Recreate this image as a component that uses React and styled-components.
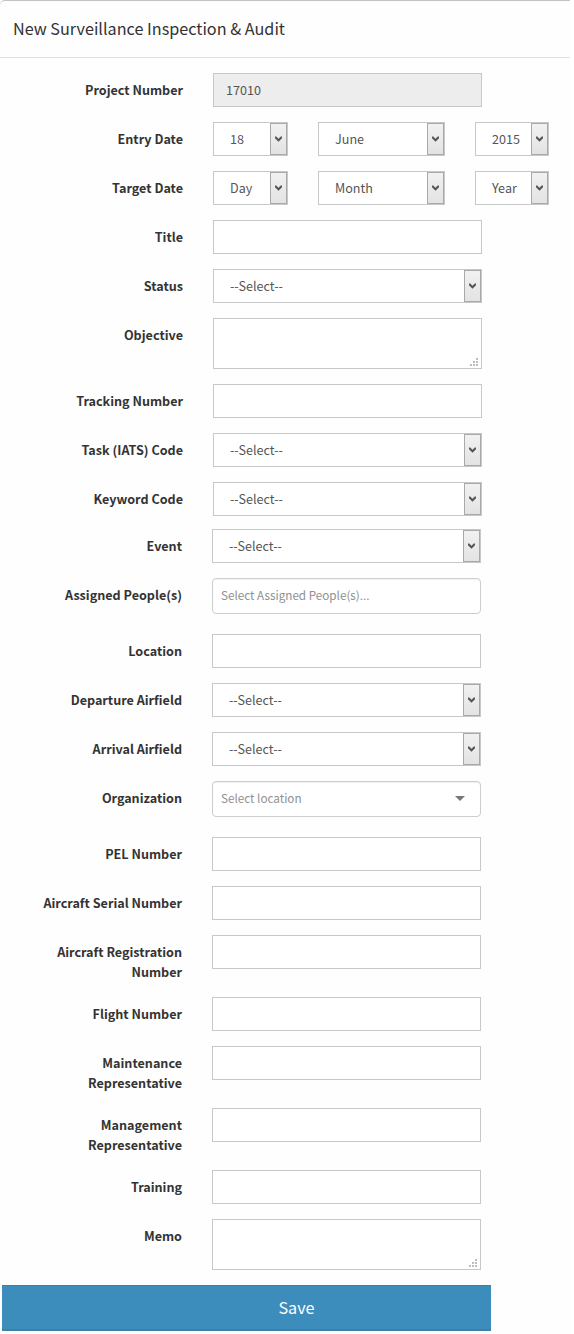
import React from 'react';
import styled, { createGlobalStyle } from 'styled-components';

const GlobalStyle = createGlobalStyle`
  *, *::before, *::after { box-sizing: border-box; }
  html, body { margin: 0; padding: 0; background: #fff; }
  body {
    font-family: "Noto Sans CJK SC", "Open Sans", sans-serif;
    font-size: 12.6px;
    line-height: 20px;
    color: #333;
  }
`;

const Dialog = styled.main`
  width: 570px;
  height: 1334px;
  border-top: 1px solid #c3c3c3;
  border-top-left-radius: 5px;
  background: #fefefe;
`;

const Header = styled.header`
  height: 57px;
  padding: 15px 13px 0;
  border-bottom: 1px solid #e2e2e2;
`;

const Heading = styled.h1`
  margin: 0;
  font-size: 16.2px;
  font-weight: 400;
  line-height: 24px;
  white-space: nowrap;
`;

const Group = styled.div`
  padding-top: ${(p) => p.$top || 0}px;
  padding-left: ${(p) => p.$left || 0}px;
`;

const Row = styled.div`
  display: flex;
  align-items: flex-start;
  margin-bottom: ${(p) => p.$gap ?? 15}px;
`;

const Label = styled.label`
  flex: none;
  width: 182px;
  margin-right: 30px;
  padding: 7px 0 0 36px;
  font-weight: 700;
  text-align: right;
`;

const Field = styled.div`
  display: flex;
  width: ${(p) => p.$width || 269}px;
  height: ${(p) => p.$height || 34}px;
  flex: none;
  border: 1px solid #c8c8c8;
  background: ${(p) => (p.$disabled ? '#ededed' : '#fff')};
  color: #555;
`;

const Value = styled.span`
  flex: 1;
  padding: 6px 0 0 ${(p) => p.$indent || 12}px;
  white-space: nowrap;
`;

const SelectButton = styled.span`
  display: flex;
  flex: none;
  width: 17px;
  align-items: center;
  justify-content: center;
  border: 1px solid #a9a9a9;
  background: linear-gradient(#f1f1f1, #e3e3e3);
`;

const Dates = styled.div`
  display: flex;
  gap: 30px;
`;

const TextArea = styled(Field)`
  align-items: flex-end;
  justify-content: flex-end;
  padding: 0 3px 2px 0;
`;

const Combo = styled(Field)`
  align-items: center;
  justify-content: space-between;
  padding: 0 15px 2px 8px;
  border-color: #cecece;
  border-radius: 4px;
  box-shadow: inset 0 1px 1px rgba(0, 0, 0, 0.06);
  color: #909090;
  font-size: 11.7px;
`;

const SaveButton = styled.button`
  display: block;
  width: 489px;
  height: 46px;
  margin: 0 0 0 2px;
  padding: 0 0 2px 100px;
  border: solid #417fa7;
  border-width: 1px 0 2px;
  background: #3c8dbc;
  color: #fff;
  font-family: inherit;
  font-size: 16.2px;
  line-height: 24px;
`;

const Chevron = () => (
  <svg width="7" height="6" viewBox="0 0 7 6">
    <path d="M0 .5h1.2L3.5 2.8 5.8.5H7v1.7L3.5 5.7 0 2.2z" fill="#555" />
  </svg>
);

const Grip = () => (
  <svg width="8" height="8" viewBox="0 0 8 8" fill="#bdbdbd">
    <path d="M6 0h2v2H6zM3 3h2v2H3zM6 3h2v2H6zM0 6h2v2H0zM3 6h2v2H3zM6 6h2v2H6z" />
  </svg>
);

const Caret = () => (
  <svg width="10" height="5" viewBox="0 0 10 5">
    <path d="M0 0h10L5 5z" fill="#777" />
  </svg>
);

const Select = ({ value = '--Select--', width }) => (
  <Field $width={width}>
    <Value $indent={16}>{value}</Value>
    <SelectButton><Chevron /></SelectButton>
  </Field>
);

const DateFields = ({ day, month, year }) => (
  <Dates>
    <Select value={day} width={75} />
    <Select value={month} width={127} />
    <Select value={year} width={74} />
  </Dates>
);

const FormRow = ({ label, gap, children }) => (
  <Row $gap={gap}>
    <Label>{label}</Label>
    {children || <Field />}
  </Row>
);

export default function App() {
  return (
    <>
      <GlobalStyle />
      <Dialog>
        <Header><Heading>New Surveillance Inspection &amp; Audit</Heading></Header>
        <Group $top={15} $left={1}>
          <FormRow label="Project Number"><Field $disabled><Value>17010</Value></Field></FormRow>
          <FormRow label="Entry Date"><DateFields day="18" month="June" year="2015" /></FormRow>
          <FormRow label="Target Date"><DateFields day="Day" month="Month" year="Year" /></FormRow>
          <FormRow label="Title" />
          <FormRow label="Status"><Select /></FormRow>
          <FormRow label="Objective"><TextArea $height={51}><Grip /></TextArea></FormRow>
          <FormRow label="Tracking Number" />
          <FormRow label="Task (IATS) Code"><Select /></FormRow>
          <FormRow label="Keyword Code" gap={13}><Select /></FormRow>
        </Group>
        <Group>
          <FormRow label="Event"><Select /></FormRow>
          <FormRow label="Assigned People(s)" gap={20}><Combo $height={36}>Select Assigned People(s)...</Combo></FormRow>
          <FormRow label="Location" />
          <FormRow label="Departure Airfield"><Select /></FormRow>
          <FormRow label="Arrival Airfield"><Select /></FormRow>
          <FormRow label="Organization" gap={20}><Combo $height={36}>Select location<Caret /></Combo></FormRow>
          <FormRow label="PEL Number" />
          <FormRow label="Aircraft Serial Number" />
          <FormRow label="Aircraft Registration Number" />
          <FormRow label="Flight Number" />
          <FormRow label="Maintenance Representative" />
          <FormRow label="Management Representative" />
          <FormRow label="Training" />
          <FormRow label="Memo"><TextArea $height={51}><Grip /></TextArea></FormRow>
        </Group>
        <SaveButton type="button">Save</SaveButton>
      </Dialog>
    </>
  );
}
